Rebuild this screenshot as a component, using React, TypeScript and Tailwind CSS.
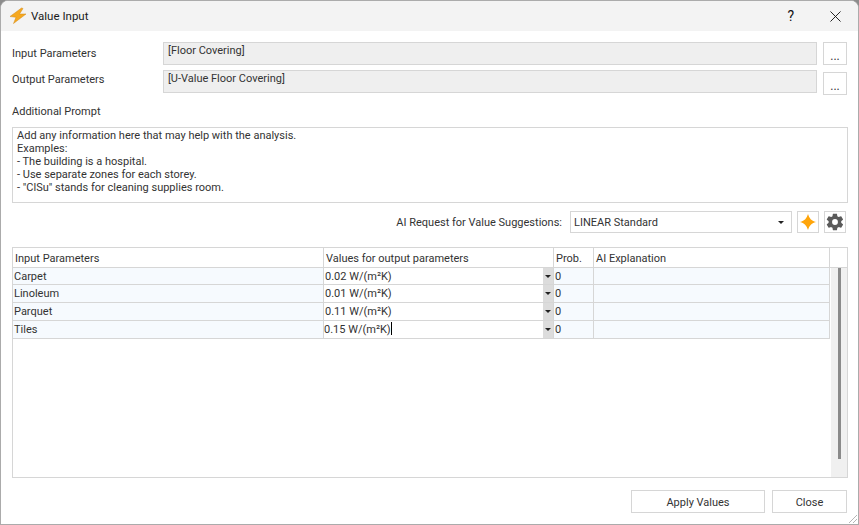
const rows = [
  { name: "Carpet", value: "0.02 W/(m²K)", h: "h-[17px]" },
  { name: "Linoleum", value: "0.01 W/(m²K)", h: "h-[18px]" },
  { name: "Parquet", value: "0.11 W/(m²K)", h: "h-[18px]" },
  { name: "Tiles", value: "0.15 W/(m²K)", h: "h-[18px]" },
];

function BoltIcon() {
  return (
    <svg viewBox="0 0 18 18" className="w-[18px] h-[18px]">
      <path d="M12.500 1 L1 9.500 L7 10.300 L4.500 16.500 L17 7 L10.500 7 L14 1.500 Z" fill="#f6a81f" stroke="#d08a1a" strokeWidth="0.5" />
    </svg>
  );
}

function SparkIcon() {
  return (
    <svg viewBox="0 0 16 16" className="w-[16px] h-[16px]">
      <path d="M8 0 C9.500 4.500 11 6.500 16 8 C11 9.500 9.500 11.500 8 16 C6.500 11.500 5 9.500 0 8 C5 6.500 6.500 4.500 8 0 Z" fill="#ffa50a" />
    </svg>
  );
}

function GearIcon() {
  return (
    <svg viewBox="0 0 24 24" className="w-[20px] h-[20px]" fill="#5a5a5a">
      <path d="M19.4 13c.1-.3.1-.7.1-1s0-.7-.1-1l2.100-1.600c.2-.2.2-.4.1-.6l-2-3.500c-.1-.2-.4-.3-.6-.2l-2.500 1c-.5-.4-1.100-.7-1.700-1L14.400 2.400c0-.2-.2-.4-.5-.4h-4c-.2 0-.4.200-.5.400L9 5.100c-.6.300-1.200.600-1.700 1l-2.500-1c-.2-.1-.5 0-.6.200l-2 3.500c-.1.200-.1.400.1.600L4.400 11c0 .3-.1.700-.1 1s0 .7.1 1l-2.100 1.600c-.2.200-.2.400-.1.600l2 3.500c.1.200.4.300.6.200l2.500-1c.5.400 1.100.700 1.700 1l.4 2.700c0 .200.2.400.5.400h4c.2 0 .5-.200.5-.400l.4-2.700c.6-.300 1.200-.600 1.700-1l2.500 1c.2.100.5 0 .6-.200l2-3.500c.1-.200.1-.400-.1-.600L19.400 13zM12 15.500a3.500 3.500 0 1 1 0-7 3.500 3.500 0 0 1 0 7z" />
    </svg>
  );
}

function ArrowDown() {
  return <span className="block w-0 h-0 border-x-[3px] border-x-transparent border-t-[3px] border-t-[#222]" />;
}

function DotsButton() {
  return (
    <button className="w-[24px] h-[23px] shrink-0 border border-[#d6d6d6] bg-white text-[12px] leading-none pt-[4px] text-[#333]">
      ...
    </button>
  );
}

export default function App() {
  return (
    <div
      className="w-[859px] h-[525px] bg-[#8c8c8c] overflow-hidden text-[#333] text-[11px] leading-[18px]"
      style={{ fontFamily: 'Roboto, "Liberation Sans", sans-serif' }}
    >
      <div className="w-[859px] h-[525px] bg-white border border-[#ababab] rounded-t-[8px] flex flex-col relative overflow-hidden">
        <div className="h-[30px] shrink-0 bg-[#f3f3f3] flex items-center pl-[8px]">
          <BoltIcon />
          <span className="ml-[4px] text-[11.5px] text-[#1a1a1a]">Value Input</span>
          <span className="ml-auto text-[14px] text-[#111] mr-[36px]">?</span>
          <svg viewBox="0 0 12 12" className="w-[11px] h-[11px] mr-[17px]" stroke="#111" strokeWidth="1">
            <path d="M0.5 0.500 L11.500 11.500 M11.500 0.500 L0.500 11.500" />
          </svg>
        </div>

        <div className="flex-1 flex flex-col pl-[11px] pr-[10px] pt-[11px]">
          <div className="flex h-[23px] pr-px">
            <div className="w-[151px] shrink-0 pt-[3px]">Input Parameters</div>
            <div className="flex-1 bg-[#efefef] border border-[#d6d6d6] pl-[4px] leading-[16px]">[Floor Covering]</div>
            <div className="ml-[6px]"><DotsButton /></div>
          </div>
          <div className="flex h-[25px] mt-[5px] pr-px">
            <div className="w-[151px] shrink-0 pt-px">Output Parameters</div>
            <div className="flex-1 h-[23px] bg-[#efefef] border border-[#d6d6d6] pl-[4px] leading-[16px]">[U-Value Floor Covering]</div>
            <div className="ml-[6px] pt-[2px]"><DotsButton /></div>
          </div>

          <div className="mt-[8px]">Additional Prompt</div>

          <div className="mt-[6px] h-[76px] border border-[#d6d6d6] px-[4px] pt-px leading-[13px]">
            <div>Add any information here that may help with the analysis.</div>
            <div>Examples:</div>
            <div>- The building is a hospital.</div>
            <div>- Use separate zones for each storey.</div>
            <div>- "ClSu" stands for cleaning supplies room.</div>
          </div>

          <div className="mt-[8px] flex items-center justify-end h-[22px] pr-[2px]">
            <span className="pt-[2px]">AI Request for Value Suggestions:</span>
            <div className="ml-[8px] w-[222px] h-[22px] border border-[#d6d6d6] flex items-center pl-[3px] pr-[7px]">
              <span className="flex-1 pt-[2px]">LINEAR Standard</span>
              <ArrowDown />
            </div>
            <div className="ml-[5px] w-[22px] h-[22px] border border-[#d6d6d6] flex items-center justify-center"><SparkIcon /></div>
            <div className="ml-[5px] w-[22px] h-[22px] border border-[#d6d6d6] flex items-center justify-center"><GearIcon /></div>
          </div>

          <div className="mt-[14px] h-[231px] border border-[#d6d6d6] flex flex-col">
            <div className="h-[20px] shrink-0 flex border-b border-[#d6d6d6]">
              <div className="w-[311px] pl-[2px] pt-[2px] border-r border-[#d6d6d6]">Input Parameters</div>
              <div className="w-[230px] pl-[2px] pt-[2px] border-r border-[#d6d6d6]">Values for output parameters</div>
              <div className="w-[40px] pl-[2px] pt-[2px] border-r border-[#d6d6d6]">Prob.</div>
              <div className="w-[236px] pl-[2px] pt-[2px] border-r border-[#d6d6d6]">AI Explanation</div>
            </div>
            <div className="flex-1 flex min-h-0">
              <div className="w-[817px]">
                {rows.map((row, i) => (
                  <div key={row.name} className={`flex ${row.h} bg-[#f6fafe] border-b border-[#d6d6d6]`}>
                    <div className="w-[311px] pl-px border-r border-[#d6d6d6]">{row.name}</div>
                    <div className="w-[230px] flex border-r border-[#d6d6d6] bg-white">
                      <div className={`flex-1 ${i === 3 ? "" : "pl-px"}`}>
                        {row.value}
                        {i === 3 && <span className="inline-block w-px h-[13px] bg-black align-[-2px]" />}
                      </div>
                      <div className="w-[10px] flex items-center justify-center bg-[#dcdcdc]"><ArrowDown /></div>
                    </div>
                    <div className="w-[40px] pl-px border-r border-[#d6d6d6]">0</div>
                    <div className="w-[236px] border-r border-[#d6d6d6]" />
                  </div>
                ))}
              </div>
              <div className="flex-1 pl-px">
                <div className="h-full bg-[#f0f0f0] flex justify-center">
                  <div className="w-[3px] h-[191px] bg-[#8a8a8a]" />
                </div>
              </div>
            </div>
          </div>

          <div className="mt-[12px] flex justify-end gap-[7px] pr-px">
            <button className="w-[134px] h-[23px] border border-[#d6d6d6] bg-white text-[#333] pt-[2px]">Apply Values</button>
            <button className="w-[75px] h-[23px] border border-[#d6d6d6] bg-white text-[#333] pt-[2px]">Close</button>
          </div>
        </div>

        <svg viewBox="0 0 10 10" className="absolute right-0 bottom-0 w-[10px] h-[10px]" stroke="#b5b5b5" strokeWidth="1">
          <path d="M9 1 L1 9 M9 5 L5 9" />
        </svg>
      </div>
    </div>
  );
}
